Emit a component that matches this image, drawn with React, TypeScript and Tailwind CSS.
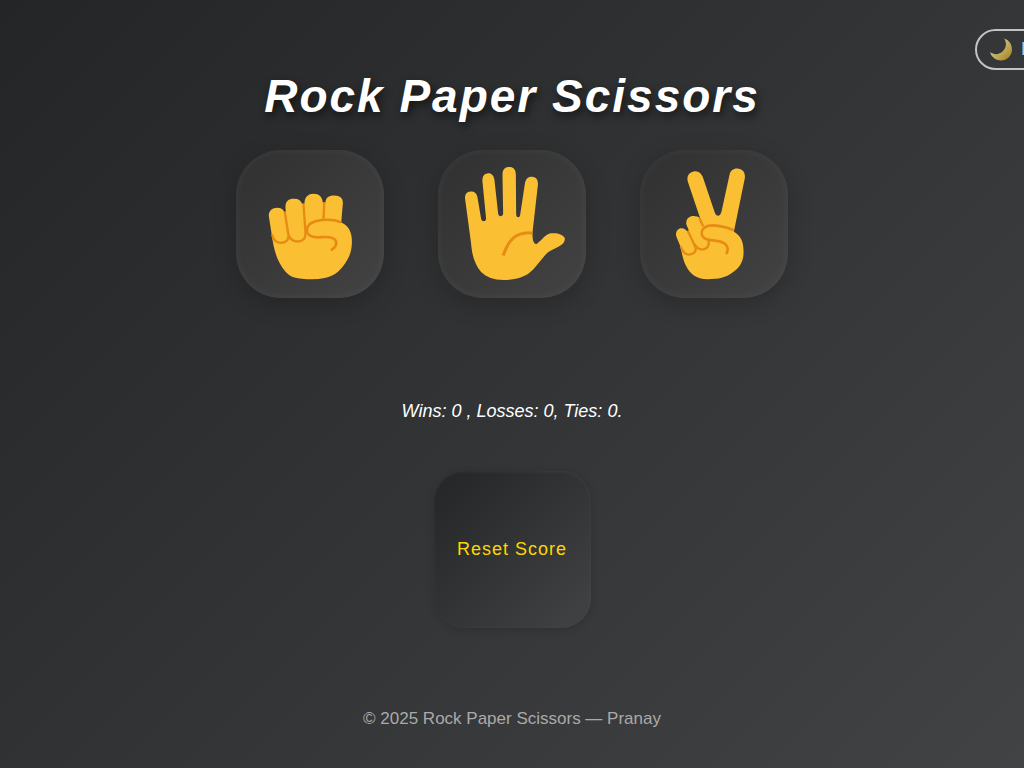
import { useState } from "react";
import type { ReactNode } from "react";

const SKIN = "#fbbf34";
const LINE = "#e78c13";

function RockIcon() {
  return (
    <svg viewBox="-74 -105 443 443" className="size-full" aria-hidden="true">
      <path
        fill={SKIN}
        d="M24 92 C24 76 35 68 49 68 C60 68 67 72 70 80 L75 80 L74 66 C74 48 84 41 98 41 C112 40 120 46 124 56 L131 55 C131 36 142 26 158 26 C175 26 184 36 186 52 L194 52 C194 38 203 31 220 31 C238 31 246 40 246 53 L241 112 C262 120 273 140 273 168 C273 200 264 220 247 242 C227 268 205 281 155 282 C105 282 88 276 73 258 C49 229 39 195 33 149 Z"
      />
      <path
        fill="none"
        stroke={LINE}
        strokeWidth="7"
        d="M34 147 C37 165 47 173 62 173 C76 172 84 164 83 150 L72 80 M84 150 C88 163 99 169 112 169 C127 168 135 159 134 143 L128 56 M190 52 L188 104"
      />
      <path
        fill="none"
        stroke={LINE}
        strokeWidth="8"
        d="M241 111 C221 104 190 102 166 108 C143 114 135 128 139 142 C146 157 162 158 182 156 C205 154 218 156 224 166 C230 176 222 189 211 194"
      />
      <circle cx="213" cy="193" r="4" fill={LINE} />
    </svg>
  );
}

function PaperIcon() {
  return (
    <svg viewBox="33 30 443 443" className="size-full" aria-hidden="true">
      <path
        fill={SKIN}
        d="M114 175 C113 162 119 155 130 154 C142 153 149 159 151 171 L162 236 C164 246 176 246 177 236 L166 124 C165 109 170 101 181 100 C193 99 200 106 202 120 L213 220 C214 231 227 231 228 220 L226 104 C226 89 233 81 246 81 C259 81 266 89 266 104 L267 224 C268 234 278 234 279 224 L293 131 C295 116 303 109 315 110 C328 111 333 120 332 134 L316 276 C315 300 320 312 328 311 C338 306 350 287 367 280 C387 277 410 282 413 296 C412 309 402 316 389 322 C374 329 364 334 354 344 C338 362 324 384 304 400 C287 412 263 419 230 419 C199 418 179 411 162 395 C141 370 135 343 132 310 Z"
      />
      <path fill="none" stroke={LINE} strokeWidth="9" d="M228 346 C238 318 253 283 291 279 Q303 276 315 279" />
    </svg>
  );
}

function ScissorsIcon() {
  return (
    <svg viewBox="31 30 443 443" className="size-full" aria-hidden="true">
      <path
        fill={SKIN}
        d="M211 234 L174 124 C170 108 178 97 191 94 C204 91 214 98 219 111 L253 212 C258 232 271 231 275 214 L299 104 C302 91 312 84 326 86 C340 88 346 98 345 113 L312 275 C332 286 341 304 341 333 C342 362 330 382 308 397 C288 412 266 417 234 417 C199 416 180 400 169 377 C161 362 157 345 153 321 L140 290 C136 277 142 268 150 265 C160 262 168 267 174 276 L177 270 L170 254 C167 240 174 231 184 228 C195 226 205 229 211 234 Z"
      />
      <path
        fill="none"
        stroke={LINE}
        strokeWidth="7"
        d="M153 319 C160 338 170 346 184 342 C198 338 201 327 194 314 L174 272 M194 312 C202 325 212 330 223 327 C234 323 239 313 236 300 M209 234 L220 259"
      />
      <path
        fill="none"
        stroke={LINE}
        strokeWidth="8"
        d="M312 270 C286 259 252 253 235 257 C219 261 212 274 217 286 C224 300 240 299 260 302 C284 305 302 317 289 342"
      />
    </svg>
  );
}

function MoonIcon() {
  return (
    <svg viewBox="0 0 24 24" className="size-6 shrink-0" aria-hidden="true">
      <defs>
        <linearGradient id="moon" x1="0" y1="0" x2="1" y2="1">
          <stop offset="0.4" stopColor="#fff09a" />
          <stop offset="0.68" stopColor="#f0cc4a" />
          <stop offset="1" stopColor="#c9961c" />
        </linearGradient>
      </defs>
      <path fill="url(#moon)" d="M15 0.5 C20 2 23 6 23 11.5 C23 17.5 18.5 22.5 12 22.5 C7 22.5 2.5 19.5 1 14 C5 17 10 17 14 13 C17.5 9.500 18 4.500 15 0.500 Z" />
    </svg>
  );
}

function MoveButton({ label, onClick, children }: { label: string; onClick: () => void; children: ReactNode }) {
  return (
    <button
      type="button"
      aria-label={label}
      onClick={onClick}
      className="size-[148px] shrink-0 rounded-[45px] bg-linear-135 from-[#303030] to-[#434343] shadow-[0_6px_24px_rgba(0,0,0,0.2),inset_0_0_10px_rgba(255,255,255,0.06)]"
    >
      {children}
    </button>
  );
}

const MOVES = ["Rock", "Paper", "Scissors"];

export default function App() {
  const [score, setScore] = useState({ wins: 0, losses: 0, ties: 0 });

  const play = (move: number) => {
    const outcome = (move - Math.floor(Math.random() * MOVES.length) + 3) % 3;
    setScore((s) => ({
      wins: s.wins + (outcome === 1 ? 1 : 0),
      losses: s.losses + (outcome === 2 ? 1 : 0),
      ties: s.ties + (outcome === 0 ? 1 : 0),
    }));
  };

  return (
    <div className="relative flex min-h-screen flex-col items-center overflow-hidden bg-linear-135 from-[#232526] to-[#414345] pt-[68px] font-['Liberation_Sans',Arial,sans-serif] text-white">
      <button
        type="button"
        className="absolute top-[29px] left-full -ml-[49px] flex h-[41px] items-center gap-2 rounded-full border-2 border-white pr-5 pl-3 text-[18px] whitespace-nowrap opacity-70"
      >
        <MoonIcon />
        Dark
      </button>

      <h1 className="text-center text-[46px] leading-[56px] font-bold tracking-[2px] italic text-shadow-[2px_4px_8px_rgba(0,0,0,0.6)]">
        Rock Paper Scissors
      </h1>

      <main className="flex flex-col items-center">
        <div className="mt-[26px] flex gap-[54px]">
          <MoveButton label="Rock" onClick={() => play(0)}>
            <RockIcon />
          </MoveButton>
          <MoveButton label="Paper" onClick={() => play(1)}>
            <PaperIcon />
          </MoveButton>
          <MoveButton label="Scissors" onClick={() => play(2)}>
            <ScissorsIcon />
          </MoveButton>
        </div>
        <p className="mt-[101px] text-[18px] leading-6 italic">
          Wins: {score.wins} , Losses: {score.losses}, Ties: {score.ties}.
        </p>
        <button
          type="button"
          onClick={() => setScore({ wins: 0, losses: 0, ties: 0 })}
          className="mt-12 size-[157px] rounded-[30px] bg-linear-135 from-[#232526] to-[#414345] text-[18px] tracking-[1px] text-[#ffd700] shadow-[0_2px_8px_rgba(0,0,0,0.15),inset_0_1px_3px_rgba(255,255,255,0.06)]"
        >
          Reset Score
        </button>
      </main>

      <footer className="mt-[79px] pb-9 text-[17px] leading-6 text-[#aaaaaa]">© 2025 Rock Paper Scissors — Pranay</footer>
    </div>
  );
}
